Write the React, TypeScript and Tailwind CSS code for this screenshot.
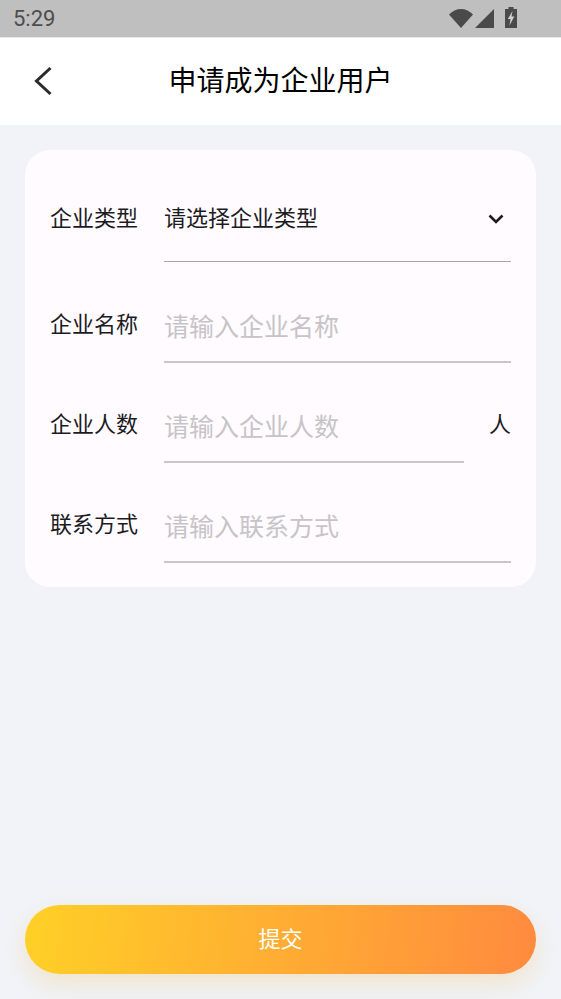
const FONT = "font-['Roboto','Noto_Sans_CJK_SC',sans-serif]";

function Row({ label, placeholder, unit }: { label: string; placeholder: string; unit?: string }) {
  return (
    <div className="flex h-[100px] items-start pl-[25px] pr-[25px]">
      <div className="mt-[46px] w-[114px] shrink-0 text-[22px] leading-[32px] text-[#1c1b1f]">{label}</div>
      <div className="flex h-full min-w-0 flex-1 items-start">
        <div className="flex h-full min-w-0 flex-1 items-start border-b-2 border-[#c9c6ca] pt-[46px]">
          <span className="text-[25px] leading-[38px] text-[#c6c4c8]">{placeholder}</span>
        </div>
        {unit && <span className="ml-[25px] mt-[46px] text-[22px] leading-[32px] text-[#1c1b1f]">{unit}</span>}
      </div>
    </div>
  );
}

export default function App() {
  return (
    <div className={`${FONT} flex h-[999px] flex-col overflow-hidden bg-[#f1f3f8]`}>
      <div className="flex h-[38px] shrink-0 items-center justify-between border-b border-[#e8e8e8] bg-[#bfbfbf] pl-[13px] pr-[43px]">
        <span className="text-[22px] leading-[38px] text-[#4d4d4d]">5:29</span>
        <div className="mt-[-1px] flex h-[22px] items-end">
          <svg width="24" height="20" viewBox="0 0 24 20">
            <path d="M0 5.500C3.500 2 7.500 0 12 0s8.500 2 12 5.500L12 19z" fill="#4a4a4a" />
          </svg>
          <svg width="21" height="20" viewBox="0 0 21 20">
            <path d="M21 0v19H2z" fill="#4a4a4a" />
          </svg>
          <svg width="14" height="22" viewBox="0 0 14 22" className="ml-[10px]">
            <path d="M4.500 0h5v2H13v19H1V2h3.500z" fill="#4a4a4a" />
            <path d="M8.500 4 3.800 12h2.700L5.500 18.500l4.800-9H7.500z" fill="#d0d0d0" />
          </svg>
        </div>
      </div>

      <header className="relative flex h-[87px] shrink-0 items-center justify-center bg-white">
        <svg width="22" height="32" viewBox="0 0 22 32" className="absolute left-[33px] top-[27px]">
          <path d="M17.500 3 3.500 16l14 13" fill="none" stroke="#2a2a2a" strokeWidth="3" />
        </svg>
        <h1 className="text-[28px] font-normal leading-[40px] text-black">申请成为企业用户</h1>
      </header>

      <main className="flex-1 px-[25px] pt-[25px]">
        <div className="rounded-[25px] bg-[#fffbfe] pb-[24px] pt-[13px]">
          <div className="mb-[1px] flex h-[99px] items-start pl-[25px] pr-[25px]">
            <div className="mt-[40px] w-[114px] shrink-0 text-[22px] leading-[32px] text-[#1c1b1f]">企业类型</div>
            <div className="flex h-full min-w-0 flex-1 items-start justify-between border-b border-[#a8a4a8] pr-[6px] pt-[40px]">
              <span className="text-[22px] leading-[32px] text-[#1c1b1f]">请选择企业类型</span>
              <svg width="18" height="12" viewBox="0 0 18 12" className="mt-[10px]">
                <path d="M2.500 2.500 9 9l6.500-6.500" fill="none" stroke="#1c1b1f" strokeWidth="2.600" />
              </svg>
            </div>
          </div>
          <Row label="企业名称" placeholder="请输入企业名称" />
          <Row label="企业人数" placeholder="请输入企业人数" unit="人" />
          <Row label="联系方式" placeholder="请输入联系方式" />
        </div>
      </main>

      <div className="shrink-0 px-[25px] pb-[25px]">
        <button className="flex h-[69px] w-full items-center justify-center rounded-full bg-[linear-gradient(97deg,#ffd026,#ff8a3f)] text-[22px] text-white shadow-[0_10px_25px_rgba(240,190,90,0.28)]">
          提交
        </button>
      </div>
    </div>
  );
}
